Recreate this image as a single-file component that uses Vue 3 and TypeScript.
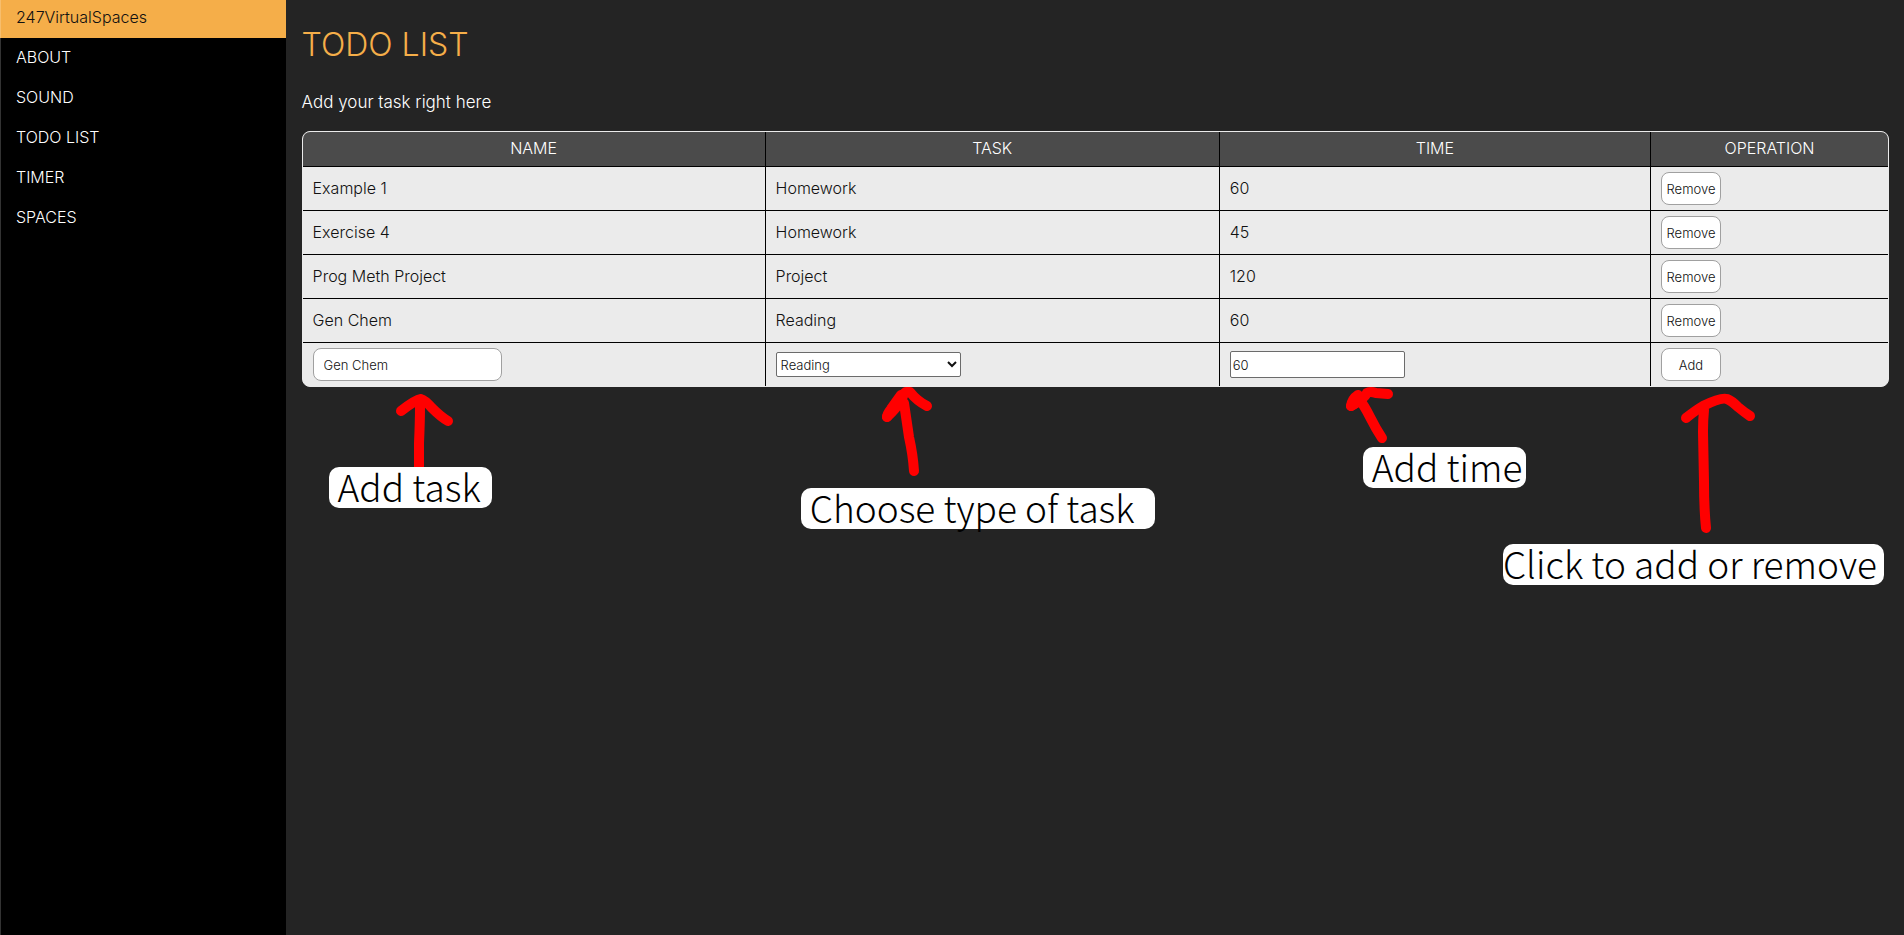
<script setup lang="ts">
import { ref } from 'vue'

interface Task {
  name: string
  kind: string
  time: number
}

interface Callout {
  text: string
  left: number
  top: number
  width: number
  tight?: boolean
}

interface Arrow {
  left: number
  top: number
  width: number
  height: number
  paths: string[]
}

const menu: string[] = ['ABOUT', 'SOUND', 'TODO LIST', 'TIMER', 'SPACES']
const kinds: string[] = ['Homework', 'Project', 'Reading']

const tasks = ref<Task[]>([
  { name: 'Example 1', kind: 'Homework', time: 60 },
  { name: 'Exercise 4', kind: 'Homework', time: 45 },
  { name: 'Prog Meth Project', kind: 'Project', time: 120 },
  { name: 'Gen Chem', kind: 'Reading', time: 60 },
])

const name = ref('Gen Chem')
const kind = ref('Reading')
const time = ref('60')

function addTask(): void {
  tasks.value.push({ name: name.value, kind: kind.value, time: Number(time.value) })
}

function removeTask(index: number): void {
  tasks.value.splice(index, 1)
}

// Horizontal places are shares of the table's width, vertical ones count down from its lower edge.
const span = 1587
const arrows: Arrow[] = [
  { left: 93, top: 4, width: 60, height: 80, paths: ['M24 80 L24 52 Q25 30 25 16', 'M6 20 Q20 9 26 8 Q30 9 37 17 Q46 26 53 30'] },
  { left: 578, top: 0, width: 52, height: 94, paths: ['M34 84 Q33 68 29 50 Q26 30 24 16', 'M7 30 Q7 27 11 22 L21 8', 'M7 30 Q16 22 22 12 Q23 7 26 5 L30 5 Q37 14 47 19'] },
  { left: 1040, top: 0, width: 50, height: 60, paths: ['M40 51 Q34 42 28 30 Q22 18 17 12', 'M9 19 Q10 12 16 8 Q16 16 9 19', 'M9 19 Q22 12 25 6 Q28 4 34 6 L46 7'] },
  { left: 1376, top: 5, width: 80, height: 142, paths: ['M28 136 Q26 116 26 90 L25 40 Q25 28 26 18', 'M8 26 Q18 18 25 14 Q43 5 49 7 Q54 9 60 15 Q66 20 72 24'] },
]
const callouts: Callout[] = [
  { text: 'Add task', left: 27, top: 80, width: 163 },
  { text: 'Choose type of task', left: 499, top: 101, width: 354 },
  { text: 'Add time', left: 1061, top: 60, width: 163 },
  { text: 'Click to add or remove', left: 1201, top: 157, width: 381, tight: true },
]

const share = (x: number): string => `${(x / span) * 100}%`
</script>

<template>
  <div class="page">
    <nav class="sidebar">
      <a class="brand" href="#">247VirtualSpaces</a>
      <a v-for="item in menu" :key="item" class="item" href="#">{{ item }}</a>
    </nav>

    <main class="content">
      <h1>TODO LIST</h1>
      <p class="lead">Add your task right here</p>

      <div class="board">
        <div class="frame">
          <table>
            <thead>
              <tr>
                <th class="col-name">NAME</th>
                <th class="col-task">TASK</th>
                <th class="col-time">TIME</th>
                <th>OPERATION</th>
              </tr>
            </thead>
            <tbody>
              <tr v-for="(task, i) in tasks" :key="i">
                <td>{{ task.name }}</td>
                <td>{{ task.kind }}</td>
                <td>{{ task.time }}</td>
                <td class="field">
                  <button type="button" class="soft action" @click="removeTask(i)">Remove</button>
                </td>
              </tr>
              <tr class="entry">
                <td class="field"><input v-model="name" class="soft name" type="text" aria-label="Name" /></td>
                <td class="field">
                  <select v-model="kind" class="kind" aria-label="Task">
                    <option v-for="k in kinds" :key="k">{{ k }}</option>
                  </select>
                </td>
                <td class="field"><input v-model="time" class="time" type="text" aria-label="Time" /></td>
                <td class="field"><button type="button" class="soft action" @click="addTask">Add</button></td>
              </tr>
            </tbody>
          </table>
        </div>

        <div class="notes">
          <svg
            v-for="(arrow, i) in arrows"
            :key="i"
            class="arrow"
            :width="arrow.width"
            :height="arrow.height"
            :style="{ left: share(arrow.left), top: arrow.top + 'px' }"
            aria-hidden="true"
          >
            <path v-for="(d, j) in arrow.paths" :key="j" :d="d" />
          </svg>
          <span
            v-for="note in callouts"
            :key="note.text"
            class="callout"
            :class="{ tight: note.tight }"
            :style="{ left: share(note.left), top: note.top + 'px', width: note.width + 'px' }"
            >{{ note.text }}</span
          >
        </div>
      </div>
    </main>
  </div>
</template>

<style>
body {
  margin: 0;
  background: #242424;
}
</style>

<style scoped>
.page {
  display: flex;
  min-height: 100vh;
  box-sizing: border-box;
  background: #242424;
  color: #fff;
  font-family: Inter, 'Liberation Sans', sans-serif;
  font-size: 16px;
  font-weight: 300;
  line-height: 24px;
}

.sidebar {
  position: relative;
  flex: 0 0 15%;
  background: #000;
}

.sidebar::after {
  content: '';
  position: absolute;
  inset: 0 auto 0 0;
  width: 1px;
  background: rgba(255, 255, 255, 0.2);
}

.brand,
.item {
  display: block;
  padding: 7px 16px 9px;
  color: #fff;
  text-decoration: none;
}

.brand {
  padding: 5px 16px 9px;
  background: #f5ae49;
  color: #111;
}

.content {
  flex: 1;
  min-width: 0;
  padding: 0 15px 0 16px;
}

h1 {
  margin: 24px 0;
  color: #f5ae49;
  font-size: 32px;
  font-weight: 300;
  line-height: 42px;
}

.lead {
  margin: 0 0 17px;
  font-size: 17px;
}

.board {
  position: relative;
}

.frame {
  overflow: hidden;
  border: 1px solid #ebebeb;
  border-radius: 8px;
  background: #ebebeb;
}

table {
  width: 100%;
  table-layout: fixed;
  border-collapse: separate;
  border-spacing: 0;
  color: #111;
}

.col-name {
  width: 29.14%;
}

.col-task {
  width: 28.65%;
}

.col-time {
  width: 27.2%;
}

th {
  box-sizing: border-box;
  height: 35px;
  padding: 4px 10px 6px;
  border-bottom: 1px solid #000;
  background: #4b4b4b;
  color: #fff;
  font-weight: 300;
  text-align: center;
}

td {
  box-sizing: border-box;
  height: 44px;
  padding: 4px 10px 6px;
  border-bottom: 1px solid #000;
}

th + th,
td + td {
  border-left: 1px solid #000;
}

.field {
  padding: 5px 10px;
}

.entry td {
  height: 43px;
  border-bottom: 0;
}

input,
select,
button {
  display: block;
  box-sizing: border-box;
  margin: 0;
  border: 1px solid #6b6b6b;
  background: #fff;
  color: #111;
  font-family: inherit;
  font-size: 13px;
  font-weight: 300;
}

.soft {
  height: 33px;
  border-color: #a0a0a0;
  border-radius: 8px;
}

.name {
  width: 189px;
  padding: 0 10px;
}

.kind {
  width: 185px;
  height: 25px;
  padding: 0;
  border-radius: 2px;
}

.time {
  width: 175px;
  height: 27px;
  padding: 0 2px;
  border-radius: 2px;
}

.action {
  width: 60px;
  padding: 0;
  text-align: center;
}

.notes {
  position: absolute;
  top: 100%;
  left: 0;
  right: 0;
}

.arrow {
  position: absolute;
  overflow: visible;
  fill: none;
  stroke: #f00;
  stroke-width: 10px;
  stroke-linecap: round;
  stroke-linejoin: round;
}

.callout {
  position: absolute;
  box-sizing: border-box;
  height: 41px;
  padding: 0 9px;
  border-radius: 10px;
  background: #fff;
  color: #000;
  font-family: 'Noto Sans CJK JP', 'Noto Sans', sans-serif;
  font-size: 37px;
  font-weight: 300;
  line-height: 38px;
  white-space: nowrap;
}

.tight {
  padding: 0;
}
</style>
